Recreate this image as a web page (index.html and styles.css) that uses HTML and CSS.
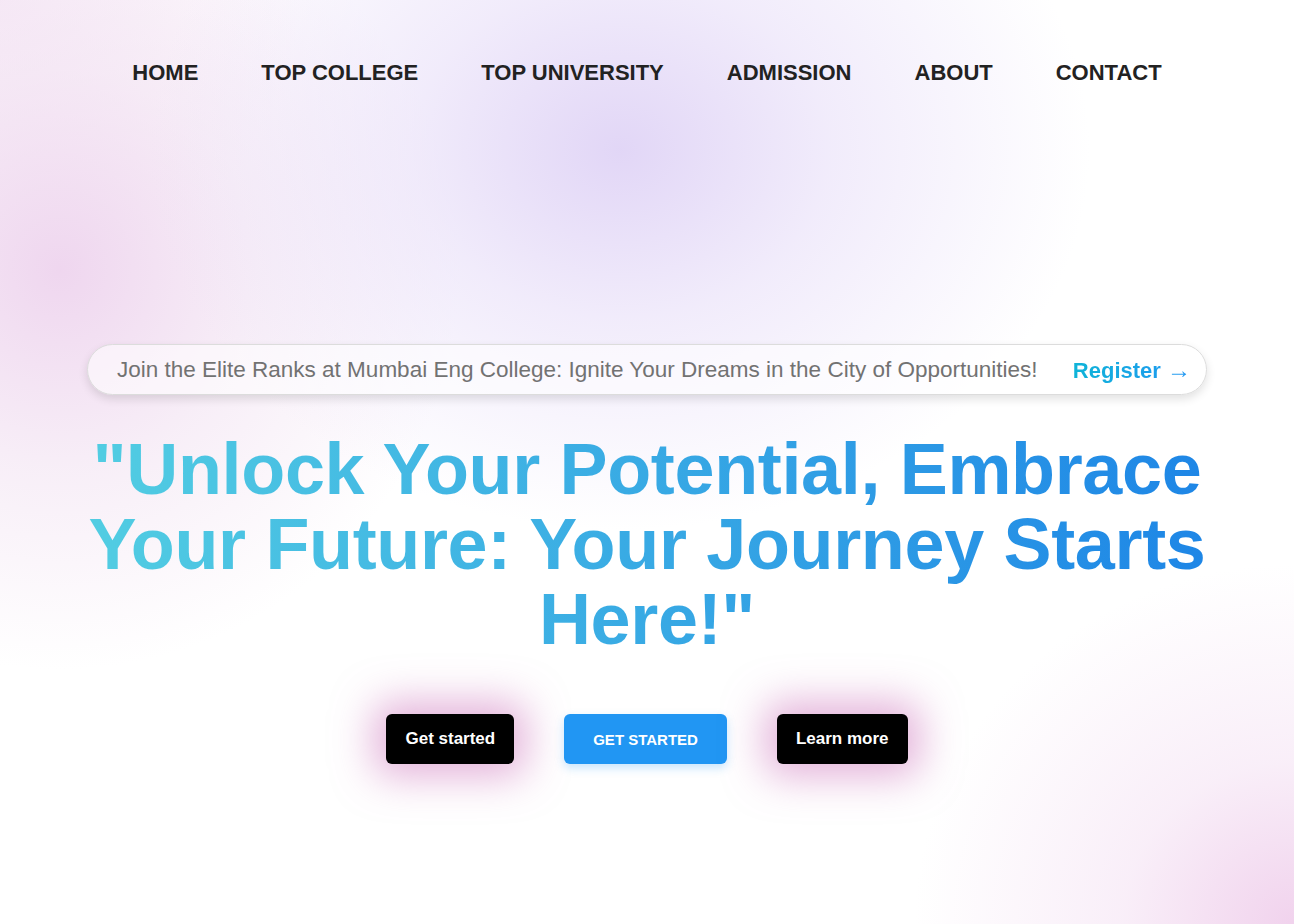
FILE: index.html
```html
<!DOCTYPE html>
<html lang="en">
<head>
<meta charset="utf-8">
<title>Mumbai Eng College</title>
<link rel="stylesheet" href="styles.css">
</head>
<body>
<nav class="nav">
  <a href="#" class="nav-link">HOME</a>
  <a href="#" class="nav-link">TOP COLLEGE</a>
  <a href="#" class="nav-link">TOP UNIVERSITY</a>
  <a href="#" class="nav-link">ADMISSION</a>
  <a href="#" class="nav-link">ABOUT</a>
  <a href="#" class="nav-link">CONTACT</a>
</nav>
<main class="hero">
  <div class="banner">
    <span class="banner-text">Join the Elite Ranks at Mumbai Eng College: Ignite Your Dreams in the City of Opportunities!</span>
    <a href="#" class="banner-link"><span class="reg">Register</span> <span class="arrow">&rarr;</span></a>
  </div>
  <h1 class="headline">"Unlock Your Potential, Embrace Your Future: Your Journey Starts Here!"</h1>
  <div class="actions">
    <a href="#" class="btn btn-dark">Get started</a>
    <a href="#" class="btn btn-blue">GET STARTED</a>
    <a href="#" class="btn btn-dark">Learn more</a>
  </div>
</main>
</body>
</html>
```
FILE: styles.css
```css
html, body {
  margin: 0;
  padding: 0;
}
body {
  min-height: 924px;
  font-family: "Liberation Sans", Arial, sans-serif;
  background:
    radial-gradient(ellipse 470px 380px at 620px 150px, rgba(224, 212, 246, 0.95) 0%, rgba(230, 220, 248, 0.55) 45%, rgba(255, 255, 255, 0) 100%),
    radial-gradient(ellipse 400px 400px at 60px 270px, rgba(238, 212, 238, 0.95) 0%, rgba(240, 222, 240, 0.5) 50%, rgba(255, 255, 255, 0) 100%),
    radial-gradient(ellipse 380px 360px at 1294px 924px, rgba(240, 208, 236, 0.95) 0%, rgba(243, 222, 242, 0.5) 45%, rgba(255, 255, 255, 0) 100%),
    radial-gradient(ellipse 300px 280px at 0px 0px, rgba(246, 232, 246, 0.8) 0%, rgba(255, 255, 255, 0) 100%),
    #ffffff;
}
.nav {
  display: flex;
  justify-content: center;
  gap: 63px;
  padding-top: 60px;
}
.nav-link {
  font-size: 22px;
  font-weight: bold;
  color: #222222;
  text-decoration: none;
}
.hero {
  width: 1120px;
  margin: 0 auto;
  padding-top: 258px;
}
.banner {
  box-sizing: border-box;
  height: 51px;
  display: flex;
  align-items: center;
  justify-content: space-between;
  padding: 0 15px 0 29px;
  border: 1px solid #dcdcdc;
  border-radius: 26px;
  background: rgba(255, 255, 255, 0.55);
  box-shadow: 0 4px 10px rgba(0, 0, 0, 0.12);
}
.banner-text {
  font-size: 22.5px;
  color: #727272;
}
.banner-link {
  font-size: 22px;
  text-decoration: none;
  background: linear-gradient(to right, #0fb4d8, #2196f3);
  -webkit-background-clip: text;
  background-clip: text;
  color: transparent;
}
.reg {
  font-weight: bold;
}
.arrow {
  font-size: 24px;
}
.headline {
  margin: 37px 0 0;
  text-align: center;
  font-size: 72px;
  line-height: 75px;
  font-weight: bold;
  letter-spacing: -0.35px;
  background: linear-gradient(to right, #52cde2, #1e86e6);
  -webkit-background-clip: text;
  background-clip: text;
  color: transparent;
}
.actions {
  display: flex;
  justify-content: center;
  gap: 50px;
  margin-top: 57px;
}
.btn {
  box-sizing: border-box;
  height: 50px;
  display: flex;
  align-items: center;
  border-radius: 6px;
  color: #ffffff;
  font-weight: bold;
  text-decoration: none;
}
.btn-dark {
  padding: 0 19px;
  font-size: 17px;
  background: #000000;
  box-shadow: 0 0 40px 12px rgba(200, 100, 180, 0.5);
}
.btn-blue {
  padding: 0 29px;
  font-size: 15px;
  background: #2196f3;
  box-shadow: 0 4px 10px rgba(33, 150, 243, 0.25);
}
```
